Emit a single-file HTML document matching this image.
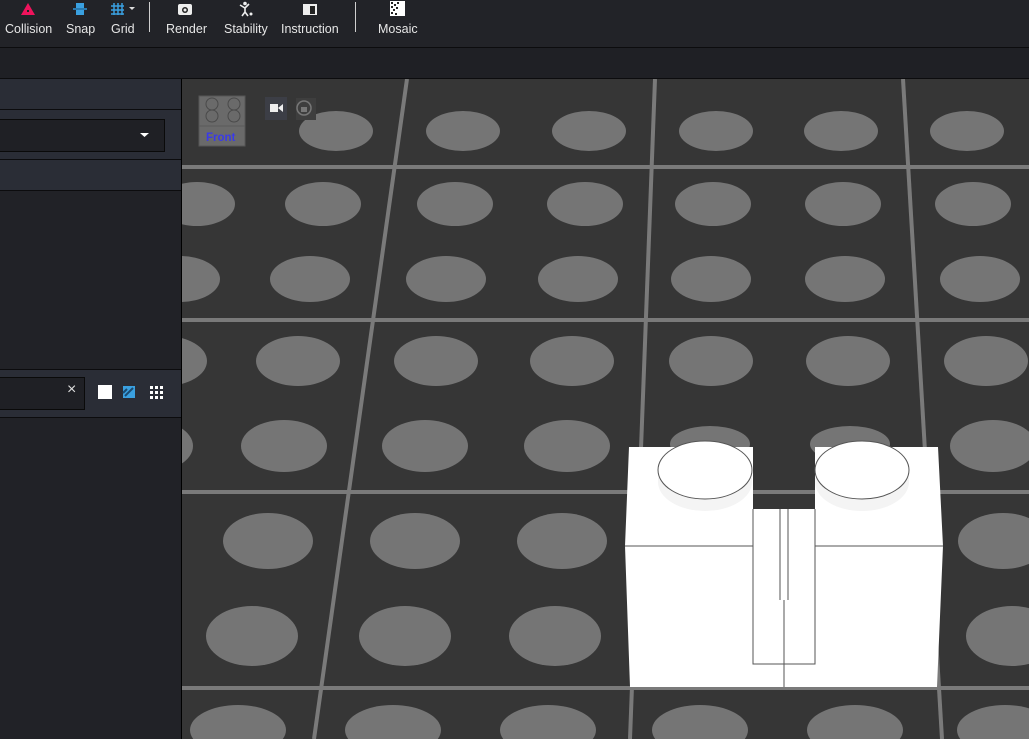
<!DOCTYPE html>
<html><head><style>
html,body{margin:0;padding:0;width:1029px;height:739px;overflow:hidden;background:#212227;font-family:"Liberation Sans",sans-serif;}
.tb{position:absolute;left:0;top:0;width:1029px;height:47px;background:#222328;border-bottom:1px solid #0c0c0e;}
.tb .it{position:absolute;top:22px;color:#e6e6e6;font-size:12.5px;}
.tb .sep{position:absolute;top:2px;width:1px;height:30px;background:#cfcfcf;}
.bar2{position:absolute;left:0;top:48px;width:1029px;height:30px;background:#1f2025;border-bottom:1px solid #0c0c0e;}
.side{position:absolute;left:0;top:79px;width:181px;height:660px;background:#212227;border-right:1px solid #000;}
.hd{position:absolute;left:0;width:181px;background:#2a2d36;border-bottom:1px solid #0c0c0e;}
</style></head><body>
<div class="tb">
 <svg style="position:absolute;left:20px;top:2px" width="16" height="14"><polygon points="8,1 15,13 1,13" fill="#f0135c"/><rect x="7" y="8" width="2" height="2" fill="#222"/></svg>
 <div class="it" style="left:5px">Collision</div>
 <svg style="position:absolute;left:72px;top:2px" width="16" height="14"><rect x="4" y="1" width="8" height="5" fill="#3aa0e0"/><rect x="4" y="8" width="8" height="5" fill="#3aa0e0"/><rect x="1" y="6" width="14" height="2" fill="#2a7ab0"/></svg>
 <div class="it" style="left:66px">Snap</div>
 <svg style="position:absolute;left:110px;top:2px" width="28" height="14"><g stroke="#3aa0e0" stroke-width="1.5"><path d="M4 1v12M8 1v12M12 1v12M1 4h13M1 8h13M1 12h13"/></g><polygon points="19,5 25,5 22,8" fill="#ddd"/></svg>
 <div class="it" style="left:111px">Grid</div>
 <div class="sep" style="left:149px"></div>
 <svg style="position:absolute;left:177px;top:2px" width="16" height="14"><rect x="1" y="2" width="14" height="11" rx="2" fill="#eee"/><circle cx="8" cy="8" r="3" fill="#222"/><circle cx="8" cy="8" r="1.5" fill="#eee"/></svg>
 <div class="it" style="left:166px">Render</div>
 <svg style="position:absolute;left:238px;top:1px" width="16" height="16"><circle cx="7" cy="2.5" r="1.8" fill="#eee"/><path d="M2 4l5 3 4-4M7 7v4l-3 4M7 11l3 4" stroke="#eee" stroke-width="1.6" fill="none"/><circle cx="13" cy="13" r="1.5" fill="#eee"/></svg>
 <div class="it" style="left:224px">Stability</div>
 <svg style="position:absolute;left:302px;top:2px" width="16" height="14"><rect x="1" y="2" width="14" height="11" fill="#eee"/><rect x="8" y="4" width="5" height="8" fill="#222"/></svg>
 <div class="it" style="left:281px">Instruction</div>
 <div class="sep" style="left:355px"></div>
 <svg style="position:absolute;left:390px;top:1px" width="16" height="15"><rect x="0" y="0" width="15" height="15" fill="#fff"/><g fill="#222"><rect x="1" y="1" width="2" height="2"/><rect x="4" y="3" width="2" height="2"/><rect x="1" y="5" width="2" height="2"/><rect x="3" y="8" width="2" height="2"/><rect x="1" y="11" width="2" height="2"/><rect x="6" y="6" width="2" height="2"/><rect x="5" y="12" width="2" height="2"/><rect x="7" y="1" width="2" height="2"/></g></svg>
 <div class="it" style="left:378px">Mosaic</div>
</div>
<div class="bar2"></div>
<div class="side">
 <div class="hd" style="top:0;height:30px"></div>
 <div class="hd" style="top:31px;height:49px"><div style="position:absolute;left:-1px;top:9px;width:164px;height:31px;background:#1f2025;border:1px solid #0a0a0a"></div><svg style="position:absolute;left:140px;top:23px" width="10" height="6"><polygon points="0,0 9,0 4.5,4" fill="#fff"/></svg></div>
 <div class="hd" style="top:81px;height:30px"></div>
 <div class="hd" style="top:290px;height:47px;border-top:1px solid #0c0c0e"><div style="position:absolute;left:-1px;top:7px;width:84px;height:31px;background:#1f2025;border:1px solid #0a0a0a"></div>
  <div style="position:absolute;left:67px;top:11px;color:#ddd;font-size:16px">×</div>
  <div style="position:absolute;left:98px;top:15px;width:14px;height:14px;background:#fff"></div>
  <svg style="position:absolute;left:122px;top:15px" width="14" height="14"><rect x="1" y="1" width="12" height="12" fill="#3aa0e0"/><path d="M3 11L11 3M1 8l4-4" stroke="#1a4a70" stroke-width="2"/></svg>
  <svg style="position:absolute;left:150px;top:16px" width="13" height="13"><g fill="#fff"><rect x="0" y="0" width="3" height="3"/><rect x="5" y="0" width="3" height="3"/><rect x="10" y="0" width="3" height="3"/><rect x="0" y="5" width="3" height="3"/><rect x="5" y="5" width="3" height="3"/><rect x="10" y="5" width="3" height="3"/><rect x="0" y="10" width="3" height="3"/><rect x="5" y="10" width="3" height="3"/><rect x="10" y="10" width="3" height="3"/></g></svg>
 </div>
</div>
<svg style="position:absolute;left:182px;top:79px" width="847" height="660" viewBox="182 79 847 660">
 <rect x="182" y="79" width="847" height="660" fill="#363636"/>
 <g fill="#757575">
  <ellipse cx="336" cy="131" rx="37" ry="20"/><ellipse cx="463" cy="131" rx="37" ry="20"/><ellipse cx="589" cy="131" rx="37" ry="20"/><ellipse cx="716" cy="131" rx="37" ry="20"/><ellipse cx="841" cy="131" rx="37" ry="20"/><ellipse cx="967" cy="131" rx="37" ry="20"/>
  <ellipse cx="197" cy="204" rx="38" ry="22"/><ellipse cx="323" cy="204" rx="38" ry="22"/><ellipse cx="455" cy="204" rx="38" ry="22"/><ellipse cx="585" cy="204" rx="38" ry="22"/><ellipse cx="713" cy="204" rx="38" ry="22"/><ellipse cx="843" cy="204" rx="38" ry="22"/><ellipse cx="973" cy="204" rx="38" ry="22"/>
  <ellipse cx="180" cy="279" rx="40" ry="23"/><ellipse cx="310" cy="279" rx="40" ry="23"/><ellipse cx="446" cy="279" rx="40" ry="23"/><ellipse cx="578" cy="279" rx="40" ry="23"/><ellipse cx="711" cy="279" rx="40" ry="23"/><ellipse cx="845" cy="279" rx="40" ry="23"/><ellipse cx="980" cy="279" rx="40" ry="23"/>
  <ellipse cx="165" cy="361" rx="42" ry="25"/><ellipse cx="298" cy="361" rx="42" ry="25"/><ellipse cx="436" cy="361" rx="42" ry="25"/><ellipse cx="572" cy="361" rx="42" ry="25"/><ellipse cx="711" cy="361" rx="42" ry="25"/><ellipse cx="848" cy="361" rx="42" ry="25"/><ellipse cx="986" cy="361" rx="42" ry="25"/>
  <ellipse cx="150" cy="446" rx="43" ry="26"/><ellipse cx="284" cy="446" rx="43" ry="26"/><ellipse cx="425" cy="446" rx="43" ry="26"/><ellipse cx="567" cy="446" rx="43" ry="26"/><ellipse cx="710" cy="444" rx="40" ry="18"/><ellipse cx="850" cy="444" rx="40" ry="18"/><ellipse cx="993" cy="446" rx="43" ry="26"/>
  <ellipse cx="130" cy="541" rx="45" ry="28"/><ellipse cx="268" cy="541" rx="45" ry="28"/><ellipse cx="415" cy="541" rx="45" ry="28"/><ellipse cx="562" cy="541" rx="45" ry="28"/><ellipse cx="1003" cy="541" rx="45" ry="28"/>
  <ellipse cx="252" cy="636" rx="46" ry="30"/><ellipse cx="405" cy="636" rx="46" ry="30"/><ellipse cx="555" cy="636" rx="46" ry="30"/><ellipse cx="1012" cy="636" rx="46" ry="30"/>
  <ellipse cx="238" cy="730" rx="48" ry="25"/><ellipse cx="393" cy="730" rx="48" ry="25"/><ellipse cx="548" cy="730" rx="48" ry="25"/><ellipse cx="700" cy="730" rx="48" ry="25"/><ellipse cx="855" cy="730" rx="48" ry="25"/><ellipse cx="1005" cy="730" rx="48" ry="25"/>
 </g>
 <g stroke="#7a7a7a" stroke-width="4">
  <line x1="182" y1="167" x2="1029" y2="167"/><line x1="182" y1="320" x2="1029" y2="320"/><line x1="182" y1="492" x2="1029" y2="492"/><line x1="182" y1="688" x2="1029" y2="688"/>
  <line x1="407" y1="79" x2="314" y2="739"/><line x1="655" y1="79" x2="630" y2="739"/><line x1="903" y1="79" x2="942" y2="739"/>
 </g>
 <rect x="199" y="96" width="46" height="50" fill="#6a6a6a" stroke="#555"/>
 <line x1="199" y1="126" x2="245" y2="126" stroke="#5a5a5a"/>
 <g fill="none" stroke="#4a4a4a"><circle cx="212" cy="104" r="6"/><circle cx="234" cy="104" r="6"/><circle cx="212" cy="116" r="6"/><circle cx="234" cy="116" r="6"/></g>
 <text x="206" y="141" fill="#3a3ae8" font-size="11.5" font-weight="bold" font-family="Liberation Sans">Front</text>
 <rect x="265" y="97" width="22" height="23" fill="#3c3e46"/>
 <rect x="270" y="104" width="8" height="8" fill="#eee"/><polygon points="278,108 283,104 283,112" fill="#eee"/>
 <rect x="296" y="98" width="20" height="22" fill="#3e3e3e"/>
 <circle cx="304" cy="108" r="7" fill="none" stroke="#777" stroke-width="1.5"/><rect x="301" y="107" width="6" height="5" fill="#777"/>
 <polygon points="629,447 753,447 753,509 815,509 815,447 938,447 943,546 937,687 630,687 625,546" fill="#fff"/>
 <g fill="none" stroke="#555" stroke-width="1">
  <line x1="625" y1="546" x2="753" y2="546"/><line x1="815" y1="546" x2="943" y2="546"/>
  <path d="M753 509V664H815V509"/><path d="M784 600V687M780 509V600M788 509V600"/>
 </g>
 <path d="M658 470V482A47 29 0 0 0 752 482V470Z" fill="#f4f4f4"/>
 <path d="M815 470V482A47 29 0 0 0 909 482V470Z" fill="#f4f4f4"/>
 <ellipse cx="705" cy="470" rx="47" ry="29" fill="#fff" stroke="#555"/>
 <ellipse cx="862" cy="470" rx="47" ry="29" fill="#fff" stroke="#555"/>
</svg>
</body></html>
